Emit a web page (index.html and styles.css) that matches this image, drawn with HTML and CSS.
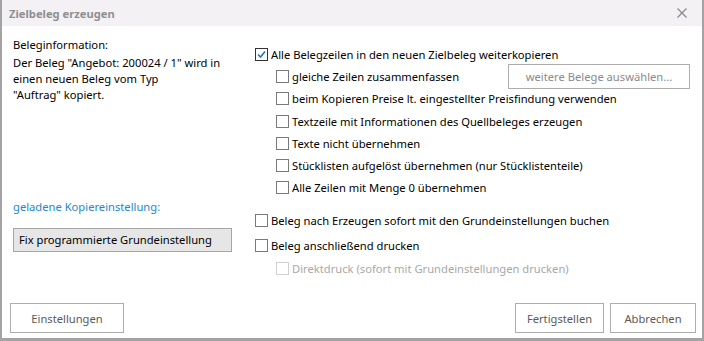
FILE: index.html
```html
<!DOCTYPE html>
<html lang="de">
<head>
  <meta charset="UTF-8">
  <title>Zielbeleg erzeugen</title>
  <link rel="stylesheet" href="styles.css">
</head>
<body>
  <div class="window">
    <div class="titlebar">
      <span class="title">Zielbeleg erzeugen</span>
      <svg class="close" width="10" height="10" viewBox="0 0 10 10"><path d="M0.5 0.5 L9.5 9.5 M9.5 0.5 L0.5 9.5" stroke="#8a8a8a" stroke-width="1.3"/></svg>
    </div>
    <div class="content">
      <div class="left">
        <div class="info-head">Beleginformation:</div>
        <div class="info-text">Der Beleg "Angebot: 200024 / 1" wird in<br>einen neuen Beleg vom Typ<br>"Auftrag" kopiert.</div>
        <div class="preset-label">geladene Kopiereinstellung:</div>
        <div class="preset-box">Fix programmierte Grundeinstellung</div>
      </div>
      <div class="right">
        <label class="row"><span class="box checked"><svg width="11" height="11" viewBox="0 0 11 11"><path d="M2 5.5 L4.5 8 L9 2.5" fill="none" stroke="#1b78c4" stroke-width="1.6"/></svg></span>Alle Belegzeilen in den neuen Zielbeleg weiterkopieren</label>
        <div class="row sub">
          <span class="box"></span>gleiche Zeilen zusammenfassen
          <button class="btn more">weitere Belege auswählen...</button>
        </div>
        <div class="row sub"><span class="box"></span>beim Kopieren Preise lt. eingestellter Preisfindung verwenden</div>
        <div class="row sub"><span class="box"></span>Textzeile mit Informationen des Quellbeleges erzeugen</div>
        <div class="row sub"><span class="box"></span>Texte nicht übernehmen</div>
        <div class="row sub"><span class="box"></span>Stücklisten aufgelöst übernehmen (nur Stücklistenteile)</div>
        <div class="row sub"><span class="box"></span>Alle Zeilen mit Menge 0 übernehmen</div>
        <div class="row gap"><span class="box"></span>Beleg nach Erzeugen sofort mit den Grundeinstellungen buchen</div>
        <div class="row print"><span class="box"></span>Beleg anschließend drucken</div>
        <div class="row sub disabled"><span class="box"></span>Direktdruck (sofort mit Grundeinstellungen drucken)</div>
      </div>
    </div>
    <div class="footer">
      <button class="btn settings">Einstellungen</button>
      <div class="spacer"></div>
      <button class="btn finish">Fertigstellen</button>
      <button class="btn cancel">Abbrechen</button>
    </div>
  </div>
</body>
</html>
```
FILE: styles.css
```css
html, body {
  margin: 0;
  padding: 0;
  background: #fff;
}
body {
  font-family: "Noto Sans", "Open Sans", sans-serif;
  font-size: 11.2px;
  color: #000;
}
.window {
  width: 704px;
  height: 341px;
  box-sizing: border-box;
  border-left: 2px solid #a3a3a3;
  border-right: 2px solid #a3a3a3;
  border-bottom: 3px solid #a3a3a3;
  display: flex;
  flex-direction: column;
}
.titlebar {
  height: 26px;
  background: #f3f1f4;
  display: flex;
  align-items: center;
  padding: 0 15px 0 7px;
}
.title {
  font-weight: bold;
  color: #8f8f8f;
  flex: 1;
}
.content {
  display: flex;
  flex: 1;
}
.left {
  width: 232px;
  padding: 11px 0 0 11px;
}
.info-head {
  line-height: 16px;
  margin-bottom: 2px;
}
.info-text {
  line-height: 16px;
  white-space: nowrap;
}
.preset-label {
  color: #1e88d0;
  margin-top: 96px;
  line-height: 16px;
}
.preset-box {
  margin-top: 13px;
  width: 212px;
  height: 22px;
  line-height: 22px;
  padding-left: 5px;
  white-space: nowrap;
  background: #e6e6e6;
  border: 1px solid #a6a6a6;
}
.right {
  padding-top: 17px;
  padding-left: 10px;
  flex: 1;
}
.row {
  display: flex;
  align-items: center;
  height: 22.3px;
  white-space: nowrap;
}
.row.sub {
  padding-left: 21px;
}
.row.gap {
  margin-top: 9px;
  height: 25px;
}
.row.print {
  height: 24px;
}
.row.disabled {
  color: #a8a8a8;
}
.box {
  width: 13px;
  height: 13px;
  border: 1px solid #7a7a7a;
  box-sizing: border-box;
  margin-right: 3px;
  display: inline-flex;
  align-items: center;
  justify-content: center;
  background: #fff;
}
.box.checked {
  border-color: #333;
}
.disabled .box {
  border-color: #d0d0d0;
}
.btn {
  font-family: inherit;
  font-size: 11.2px;
  color: #5a5a5a;
  background: #fff;
  border: 1px solid #adadad;
  height: 30px;
  padding: 0;
}
.more {
  margin-left: auto;
  margin-right: 12px;
  width: 182px;
  height: 25px;
  color: #8a8a8a;
}
.footer {
  display: flex;
  padding: 0 6px 5px 8px;
}
.settings {
  width: 114px;
}
.spacer {
  flex: 1;
}
.finish {
  width: 89px;
  margin-right: 6px;
}
.cancel {
  width: 86px;
}
```
